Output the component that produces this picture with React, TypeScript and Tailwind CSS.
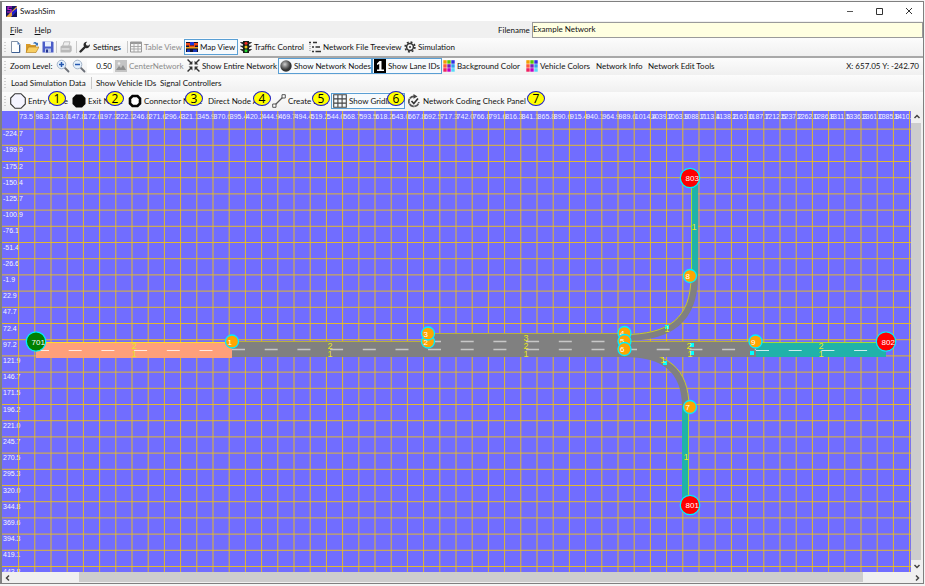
import type { ReactNode } from "react";

const CELL = 16.2;
const COLUMNS = Array.from({ length: 56 }, (_, i) => ({ x: 16.6 + i * CELL, label: (73.52 + i * 24.76).toFixed(1) }));
const ROWS = Array.from({ length: 28 }, (_, i) => ({ y: 18.1 + i * CELL, label: (-224.7 + i * 24.7605).toFixed(1) }));

type NodeSpec = { id: string; x: number; y: number; kind: "entry" | "exit" | "connector" };

const NODES: NodeSpec[] = [
  { id: "701", x: 34, y: 230.5, kind: "entry" },
  { id: "1", x: 230, y: 230.5, kind: "connector" },
  { id: "2", x: 426, y: 230.5, kind: "connector" },
  { id: "3", x: 426, y: 222.5, kind: "connector" },
  { id: "4", x: 622.5, y: 222, kind: "connector" },
  { id: "5", x: 622.5, y: 230, kind: "connector" },
  { id: "6", x: 622.5, y: 238, kind: "connector" },
  { id: "7", x: 688, y: 296, kind: "connector" },
  { id: "8", x: 688, y: 165, kind: "connector" },
  { id: "9", x: 753.5, y: 230.5, kind: "connector" },
  { id: "801", x: 688, y: 394, kind: "exit" },
  { id: "802", x: 884, y: 230.5, kind: "exit" },
  { id: "803", x: 688, y: 67, kind: "exit" },
];

const NODE_FILL = { entry: "#008000", exit: "#ff0000", connector: "#ffa500" };

const LANE_IDS: [string, number, number][] = [
  ["2", 132, 238], ["1", 132, 246],
  ["2", 328, 238], ["1", 328, 246],
  ["3", 524, 230], ["2", 524, 238], ["1", 524, 246],
  ["2", 687, 238], ["1", 688, 246],
  ["2", 819, 238], ["1", 819, 246],
  ["1", 692, 119], ["1", 684, 349],
  ["1", 665, 221], ["1", 661, 252],
];

const DETECTORS: [number, number][] = [[665, 216], [663, 252], [690, 234], [690, 242], [750, 242]];

function NetworkMap() {
  return (
    <svg role="img" aria-label="Network map" className="block h-full w-full bg-[#716dff] font-['Liberation_Sans',sans-serif]">
      <g fill="#f4f4ff" fontSize="7">
        {COLUMNS.slice(0, 55).map((c) => (
          <text key={c.label} x={c.x + 0.6} y="8">{c.label}</text>
        ))}
        {ROWS.map((r) => (
          <text key={r.label} x="1" y={r.y + 7}>{r.label}</text>
        ))}
      </g>
      <g stroke="#ecc018" strokeWidth="0.9">
        {COLUMNS.map((c) => (
          <line key={c.label} x1={c.x} x2={c.x} y1="0" y2="100%" />
        ))}
        {ROWS.map((r) => (
          <line key={r.label} x1="0" x2="909" y1={r.y} y2={r.y} />
        ))}
      </g>

      <g fill="none">
        <path d="M622 226.5C668 226.5 692.5 209 692.5 165" stroke="#808080" strokeWidth="7" />
        <path d="M622 223.5C666 223.5 689 208 689 165" stroke="#c8c832" />
        <path d="M622 242.5C664 242.5 683.5 260 683.5 296" stroke="#808080" strokeWidth="7" />
        <path d="M622 240C666 240 687 258 687 296" stroke="#c8c832" />
      </g>
      <rect x="34" y="231" width="196" height="16" fill="#ffa07a" />
      <rect x="230" y="230" width="524" height="16" fill="#808080" />
      <rect x="426" y="222" width="196" height="24" fill="#808080" />
      <rect x="754" y="231" width="130" height="15" fill="#20b2aa" />
      <rect x="689" y="67" width="7" height="98" fill="#20b2aa" />
      <rect x="680" y="296" width="7" height="98" fill="#20b2aa" />
      <g fill="none" strokeWidth="1">
        <path d="M34 231.5H230" stroke="#ffdc28" />
        <path d="M230 230.5H426M426 222.5H622M622 230.5H754" stroke="#b9b03c" />
        <path d="M754 231.5H884M689.5 67V165M686.5 296V394" stroke="#a5dc32" />
        <path d="M34 239.5H230" stroke="#ffece4" strokeDasharray="13 19.7" />
        <path d="M230 238.5H426M426 230.5H622M426 238.5H622M622 238.5H754" stroke="#c8c8c8" strokeWidth="1.3" strokeDasharray="13 19.7" />
        <path d="M754 239.5H884" stroke="#d0efed" strokeDasharray="13 19.7" />
      </g>
      <g fill="#00ffff">
        {DETECTORS.map(([x, y]) => (
          <rect key={`${x},${y}`} x={x - 2} y={y - 2} width="4" height="4" />
        ))}
      </g>
      <g fill="#e6e61e" fontSize="9" textAnchor="middle">
        {LANE_IDS.map(([id, x, y]) => (
          <text key={`${x},${y}`} x={x} y={y}>{id}</text>
        ))}
      </g>
      {NODES.map((n) => (
        <g key={n.id}>
          <circle cx={n.x} cy={n.y} r={n.kind === "connector" ? 6.5 : 9.7} fill={NODE_FILL[n.kind]} stroke="#00f0ff" strokeWidth="1.3" />
          <text x={n.x - 4.5} y={n.y + 3} fontSize="8" fill="#fff">{n.id}</text>
        </g>
      ))}
    </svg>
  );
}

function Grip() {
  return (
    <svg className="mr-0.5 h-3 w-1 shrink-0" viewBox="0 0 4 12">
      <path d="M2 1v11" stroke="#aaa" strokeDasharray="1 2" />
    </svg>
  );
}

function Separator() {
  return <span className="h-3 w-px shrink-0 bg-[#c8c8c8]" />;
}

type ToolProps = { width: string; icon?: ReactNode; label?: string; active?: boolean; disabled?: boolean; children?: ReactNode };

function Tool({ width, icon, label, active, disabled, children }: ToolProps) {
  return (
    <button
      type="button"
      disabled={disabled}
      aria-label={label}
      className={`flex h-4 shrink-0 items-center gap-0.5 whitespace-nowrap px-px ${width} ${active ? "border border-[#5a9fd4] bg-[#f6fafd]" : ""} ${disabled ? "text-[#8c8c8c]" : ""}`}
    >
      {icon}
      {children && <span>{children}</span>}
    </button>
  );
}

const BAR = "flex items-center bg-linear-to-b from-[#fcfcfc] to-[#f0f0f0] pl-px";
const ICON = "h-3 w-3 shrink-0";

const NewIcon = (
  <svg className={ICON} viewBox="0 0 12 12"><path d="M1.5 .5h6l2.500 3v8H1.500z" fill="#fff" stroke="#667790" strokeWidth=".8" /><path d="M7.500 .5v3H10z" fill="#4a78b8" /><path d="M9.500 4v7.500H2" fill="none" stroke="#3c5f94" /></svg>
);
const OpenIcon = (
  <svg className="h-3 w-3.5 shrink-0" viewBox="0 0 14 12"><path d="M1 3h4l1 1h5v7H1z" fill="#d89a28" /><path d="M3.500 6H14l-3 5.500H1z" fill="#f8ce62" stroke="#b07818" strokeWidth=".6" /><path d="M8 2.500c1-2 3-2 4-.3l1-.7v3h-3l1-1c-.8-1.200-2-1.200-3-1" fill="#3a74b8" /></svg>
);
const SaveIcon = (
  <svg className={ICON} viewBox="0 0 12 12"><path d="M.5.500h10L11.500 1.500v10H.5z" fill="#4a5cc8" /><path d="M3 .5h6v5H3z" fill="#e8effc" /><path d="M3 7.500h6v4H3z" fill="#b9c6ea" /><path d="M4 8.500h2v3H4z" fill="#24338c" /></svg>
);
const PrintIcon = (
  <svg className={ICON} viewBox="0 0 12 12"><path d="M4 .8h6L8.500 6H2.500z" fill="#eee" stroke="#aaa" strokeWidth=".7" /><path d="M.5 5.500l1.500-1h9l.7 1v4.500l-1.500 1.500H.5z" fill="#b8b8b8" /><path d="M1.500 8h8" stroke="#f4f4f4" /></svg>
);
const WrenchIcon = (
  <svg className={ICON} viewBox="0 0 12 12"><path d="M1.500 10.500L6 6" stroke="#2b2b2b" strokeWidth="2.400" strokeLinecap="round" /><path d="M10.800 3.200A3.200 3.200 0 1 1 8.200.800L6.800 2.400l.5 1.900 1.900.4z" fill="#2b2b2b" /></svg>
);
const TableIcon = (
  <svg className={ICON} viewBox="0 0 12 12"><path d="M.5 1h11v10H.5z" fill="#f5f5f5" stroke="#999" /><path d="M.5 1h11v2H.5z" fill="#999" /><path d="M.5 5.500h11M.5 8h11M4 2v9M8 2v9" stroke="#a5a5a5" strokeWidth=".9" /></svg>
);
const MapIcon = (
  <svg className={ICON} viewBox="0 0 12 12"><path d="M0 1h12v10H0z" fill="#101030" /><path d="M0 2h4v2.500h4V2h4v2.500h-3v1.500H3V4.500H0z" fill="#f04818" /><path d="M4 1h4v3H4z" fill="#1c34d8" /><path d="M0 6h12v1.500H0z" fill="#e8a018" /><path d="M1 8.500h3V11H1zM7 8.500h4V11H7z" fill="#1838b8" /></svg>
);
const TrafficIcon = (
  <svg className={ICON} viewBox="0 0 12 12"><path d="M3 0h6v12H3z" fill="#172217" /><path d="M.5 1.500h2.500v1.500zM.5 5h2.500v1.500zM.5 8.500h2.500V10zM11.500 1.500H9v1.500zM11.500 5H9v1.500zM11.500 8.500H9V10z" fill="#222" stroke="#222" strokeWidth=".7" /><circle cx="6" cy="2.200" r="1.500" fill="#f02820" /><circle cx="6" cy="6" r="1.500" fill="#f4c818" /><circle cx="6" cy="9.800" r="1.500" fill="#28d838" /></svg>
);
const TreeIcon = (
  <svg className={ICON} viewBox="0 0 12 12"><path d="M0 1.500h2M4 1.500h4M3 6h2M6.500 6H11M3 10.500h2M6.500 10.500H12" stroke="#333" strokeWidth="1.300" /><path d="M1 3v8" stroke="#888" strokeDasharray="1 1" /></svg>
);
const GearIcon = (
  <svg className={ICON} viewBox="0 0 12 12"><circle cx="6" cy="6" r="4.900" fill="none" stroke="#333" strokeWidth="1.600" strokeDasharray="1.900 1.948" /><circle cx="6" cy="6" r="3.400" fill="none" stroke="#333" strokeWidth="1.500" /><circle cx="6" cy="6" r="1" fill="#333" /></svg>
);
const Magnifier = ({ plus }: { plus?: boolean }) => (
  <svg className="h-3.5 w-3.5 shrink-0" viewBox="0 0 14 14"><path d="M9 9l3.500 3.500" stroke="#6b6f78" strokeWidth="1.800" strokeLinecap="round" /><circle cx="5.500" cy="5.500" r="4.300" fill="#e4f0fc" stroke="#a4b4c8" /><path d={plus ? "M3 5.500h5M5.500 3v5" : "M3 5.500h5"} stroke="#2458b0" strokeWidth="1.500" /></svg>
);
const PictureIcon = (
  <svg className={ICON} viewBox="0 0 12 12"><path d="M0 0h12v12H0z" fill="#c4c4c4" /><path d="M1 10l3-4 2 2 2-3 3 5z" fill="#8f8f8f" /><circle cx="4" cy="3.500" r="1.300" fill="#eee" /></svg>
);
const ArrowsIcon = (
  <svg className="h-[13px] w-[13px] shrink-0" viewBox="0 0 12 12"><path d="M.5.5l3.300 3.300M11.500.5L8.200 3.800M.5 11.500l3.300-3.300M11.500 11.500L8.200 8.200" stroke="#333" strokeWidth="1.300" /><path d="M5 1.500V5H1.500zM7 1.500V5h3.500zM5 10.500V7H1.500zM7 10.500V7h3.500z" fill="#333" /></svg>
);
const SphereIcon = (
  <svg className={ICON} viewBox="0 0 12 12"><defs><radialGradient id="sphere" cx=".4" cy=".35"><stop offset="0" stopColor="#d0d0d0" /><stop offset=".5" stopColor="#7c7c7c" /><stop offset="1" stopColor="#333" /></radialGradient></defs><circle cx="6" cy="6" r="5.700" fill="url(#sphere)" /></svg>
);
const LaneIcon = (
  <svg className="h-3.5 w-3 shrink-0" viewBox="0 0 12 14"><path d="M0 0h12v14H0z" fill="#000" /><path d="M3 4.500L5.500 2h2v8.500H10v1.500H3v-1.500h2.200V5L3 6z" fill="#fff" /></svg>
);
const PALETTE = ["#f0a000", "#58c800", "#3030e0", "#ff5a38", "#7a20b8", "#30a0f0", "#f02060", "#c000c0", "#58d8f8"];
const PaletteIcon = (
  <svg className={ICON} viewBox="0 0 12 12">{PALETTE.map((c, i) => <rect key={c} x={(i % 3) * 4 + 0.3} y={Math.floor(i / 3) * 4 + 0.2} width="3.400" height="3.500" fill={c} />)}</svg>
);
const EntryIcon = <svg className="h-4 w-4 shrink-0" viewBox="0 0 16 16"><path d="M5 .7h6L15.300 5v6L11 15.300H5L.7 11V5z" fill="#f5f5ff" stroke="#333" strokeWidth="1.100" /></svg>;
const ExitIcon = <svg className="h-3.5 w-3.5 shrink-0" viewBox="0 0 14 14"><path d="M4 .5h6L13.500 4v6L10 13.500H4L.5 10V4z" fill="#080808" /></svg>;
const ConnectorIcon = <svg className="h-3.5 w-3.5 shrink-0" viewBox="0 0 14 14"><path d="M4.500 2h5L12 4.500v5L9.500 12h-5L2 9.500v-5z" fill="#fff" stroke="#050505" strokeWidth="2.600" /></svg>;
const LinkIcon = <svg className="h-3.5 w-3.5 shrink-0" viewBox="0 0 14 14"><path d="M2.500 11.500l9-9" stroke="#555" strokeWidth="1.300" /><path d="M.7 10h3.300v3.300H.7zM10 .7h3.300V4H10z" fill="#fff" stroke="#555" /></svg>;
const GridIcon = <svg className="h-3.5 w-3.5 shrink-0" viewBox="0 0 14 14"><path d="M.7.700h12.600v12.600H.7zM.7 4.900h12.600M.7 9.100h12.600M4.900.7v12.600M9.100.7v12.600" fill="none" stroke="#444" strokeWidth="1.100" /></svg>;
const CheckIcon = <svg className="h-3.5 w-3.5 shrink-0" viewBox="0 0 14 14"><path d="M7.500 2.500a5 5 0 1 0 4.300 5.500" fill="none" stroke="#555" strokeWidth="1.700" strokeDasharray="5 .5" /><path d="M6.500 0l4 2.500-4 2.300z" fill="#444" /><path d="M4.500 7l2.300 2.500L11 4.500" fill="none" stroke="#333" strokeWidth="1.600" /></svg>;

const CALLOUTS = ["left-[46px]", "left-[104px]", "left-[183px]", "left-[251px]", "left-[310px]", "left-[385px]", "left-[525px]"];

function ScrollArrow({ label, d, size }: { label: string; d: string; size: string }) {
  return (
    <button type="button" aria-label={label} className={`grid shrink-0 place-items-center ${size}`}>
      <svg className="h-2 w-2" viewBox="0 0 8 8"><path d={d} fill="none" stroke="#444" strokeWidth="1.500" /></svg>
    </button>
  );
}

export default function App() {
  return (
    <div className="flex h-screen flex-col bg-[#f4f4f4] pt-px pr-px pb-0.5 font-[Lato,'Open_Sans',sans-serif] text-[8px] leading-[10px] text-[#111]">
      <div className="flex min-h-0 flex-1 flex-col border border-l-2 border-[#808080] bg-[#f0f0f0]">
        <header className="flex h-[19px] shrink-0 items-center bg-white pb-px pl-1">
          <svg className="mr-[3px] h-[11px] w-[11px]" viewBox="0 0 11 11">
            <path d="M0 0h11v11H0z" fill="#141460" />
            <path d="M0 11L11 0v4L5 11z" fill="#e0a040" />
            <path d="M6 1H2v2.500h3V6H1" fill="none" stroke="#d020d0" strokeWidth="1.200" />
            <path d="M6 6l5-4v3l-5 5z" fill="#2020d0" />
          </svg>
          <span className="flex-1">SwashSim</span>
          <div className="flex items-center">
            <button type="button" aria-label="Minimize" className="grid w-[29px] place-items-center"><svg className="h-2 w-2" viewBox="0 0 8 8"><path d="M1 4.500h6" stroke="#555" /></svg></button>
            <button type="button" aria-label="Maximize" className="grid w-[30px] place-items-center"><svg className="h-2 w-2" viewBox="0 0 8 8"><path d="M1.500 1.500h6v6h-6z" fill="none" stroke="#333" /></svg></button>
            <button type="button" aria-label="Close" className="grid w-[29px] place-items-center"><svg className="h-2 w-2" viewBox="0 0 8 8"><path d="M1 1l6 6M7 1L1 7" stroke="#333" /></svg></button>
          </div>
        </header>

        <div className="flex h-[17px] shrink-0 items-center">
          <nav className="flex w-[496px] gap-3 pl-2">
            <button type="button"><u>F</u>ile</button>
            <button type="button"><u>H</u>elp</button>
          </nav>
          <label htmlFor="filename" className="w-[34px]">Filename</label>
          <input id="filename" defaultValue="Example Network" className="h-4 min-w-0 flex-1 border border-[#9a9a9a] bg-[#ffffe1] pb-0.5" />
        </div>

        <div className={`${BAR} h-[18px] shrink-0`}>
          <Grip />
          <Tool width="w-[15px]" icon={NewIcon} label="New" />
          <Tool width="w-[17px]" icon={OpenIcon} label="Open" />
          <Tool width="w-[15px]" icon={SaveIcon} label="Save" />
          <Separator />
          <Tool width="w-[19px]" icon={<span className="pl-0.5">{PrintIcon}</span>} label="Print" disabled />
          <Separator />
          <Tool width="w-[50px]" icon={<span className="pl-px">{WrenchIcon}</span>}>Settings</Tool>
          <Separator />
          <Tool width="w-[56px]" icon={<span className="pl-px">{TableIcon}</span>} disabled>Table View</Tool>
          <Tool width="w-[54px]" icon={MapIcon} active>Map View</Tool>
          <Tool width="w-[70px]" icon={<span className="pl-px">{TrafficIcon}</span>}>Traffic Control</Tool>
          <Tool width="w-[95px]" icon={TreeIcon}>Network File Treeview</Tool>
          <Tool width="w-[60px]" icon={GearIcon}>Simulation</Tool>
        </div>
        <div className="h-0.5 shrink-0 bg-[#a8a8a8]" />

        <div className={`${BAR} h-[17px] shrink-0 pb-0.5`}>
          <Grip />
          <label htmlFor="zoom" className="w-[46px] shrink-0 pl-px whitespace-nowrap">Zoom Level:</label>
          <Tool width="w-4" icon={<Magnifier plus />} label="Zoom in" />
          <Tool width="w-4" icon={<Magnifier />} label="Zoom out" />
          <input id="zoom" defaultValue="0.50" className="h-[14px] w-[26px] shrink-0 bg-white pr-px text-right" />
          <Tool width="w-[73px]" icon={<span className="pl-px">{PictureIcon}</span>} disabled>CenterNetwork</Tool>
          <Tool width="w-[92px]" icon={ArrowsIcon}>Show Entire Network</Tool>
          <Tool width="w-[94px]" icon={SphereIcon} active>Show Network Nodes</Tool>
          <Tool width="w-[70px]" icon={LaneIcon} active>Show Lane IDs</Tool>
          <Tool width="w-[83px]" icon={PaletteIcon}>Background Color</Tool>
          <Tool width="w-[70px]" icon={PaletteIcon}>Vehicle Colors</Tool>
          <Tool width="w-[52px]">Network Info</Tool>
          <Tool width="w-[70px]">Network Edit Tools</Tool>
          <output className="ml-auto pr-1 whitespace-nowrap">X: 657.05 Y: -242.70</output>
        </div>

        <div className={`${BAR} h-[17px] shrink-0 pb-0.5`}>
          <Grip />
          <Tool width="w-[82px]"><span className="pl-px">Load Simulation Data</span></Tool>
          <Separator />
          <Tool width="w-[65px]"><span className="pl-[3px]">Show Vehicle IDs</span></Tool>
          <Tool width="w-[70px]"><span className="pl-0.5">Signal Controllers</span></Tool>
        </div>

        <div className={`${BAR} relative h-[19px] shrink-0 pb-0.5`}>
          <Grip />
          <Tool width="w-[62px]" icon={EntryIcon}>Entry Node</Tool>
          <Tool width="w-[56px]" icon={ExitIcon}>Exit Node</Tool>
          <Tool width="w-[78px]" icon={ConnectorIcon}>Connector Node</Tool>
          <Tool width="w-[66px]"><span className="pl-0.5">Direct Node Add</span></Tool>
          <Tool width="w-[60px]" icon={LinkIcon}>Create Link</Tool>
          <Tool width="w-[74px]" icon={GridIcon} active>Show Gridlines</Tool>
          <Tool width="w-[124px]" icon={<span className="pl-px">{CheckIcon}</span>}>Network Coding Check Panel</Tool>
          {CALLOUTS.map((left, i) => (
            <span key={left} className={`absolute -top-px grid h-[15px] w-[18px] place-items-center rounded-[50%] border border-[#1a1ac8] bg-[#ffff00] font-['Open_Sans',sans-serif] text-[12px] leading-[13px] text-black ${left}`}>{i + 1}</span>
          ))}
        </div>

        <main className="flex min-h-0 flex-1">
          <div className="min-w-0 flex-1 overflow-hidden"><NetworkMap /></div>
          <div className="flex w-3 shrink-0 flex-col">
            <ScrollArrow label="Scroll up" d="M1.500 5L4 2.500 6.500 5" size="h-3 w-[11px]" />
            <div className="mr-0.5 flex-1 bg-[#cdcdcd]" />
            <ScrollArrow label="Scroll down" d="M1.500 3L4 5.500 6.500 3" size="h-3 w-[11px]" />
          </div>
        </main>
        <div className="flex h-[11px] shrink-0 items-stretch">
          <ScrollArrow label="Scroll left" d="M5 1.500L2.500 4 5 6.500" size="w-[11px]" />
          <div className="flex flex-1 pr-[47px] pl-[66px]"><div className="mb-px flex-1 bg-[#cdcdcd]" /></div>
          <ScrollArrow label="Scroll right" d="M3 1.500L5.500 4 3 6.500" size="w-[13px]" />
        </div>
      </div>
    </div>
  );
}
